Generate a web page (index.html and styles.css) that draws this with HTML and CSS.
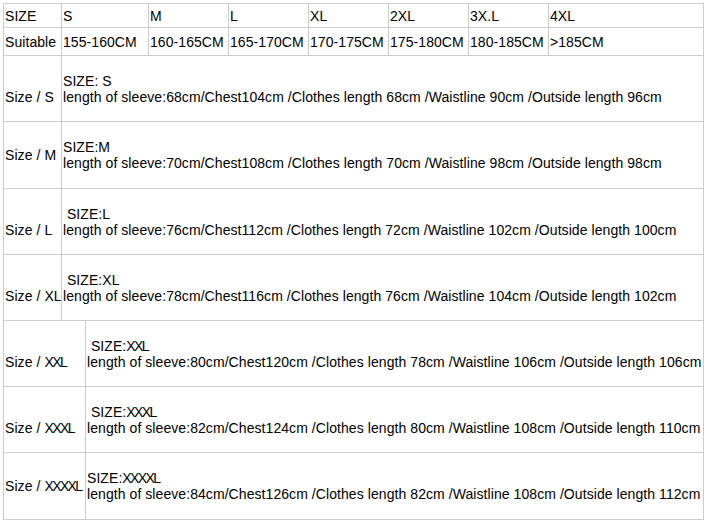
FILE: index.html
```html
<!DOCTYPE html>
<html lang="en">
<head>
<meta charset="utf-8">
<title>Size chart</title>
<link rel="stylesheet" href="styles.css">
</head>
<body>
<div class="chart">
  <div class="grid grid--head">
    <div class="cell row1">SIZE</div>
    <div class="cell row1">S</div>
    <div class="cell row1">M</div>
    <div class="cell row1">L</div>
    <div class="cell row1">XL</div>
    <div class="cell row1">2XL</div>
    <div class="cell row1">3X.L</div>
    <div class="cell row1">4XL</div>
    <div class="cell row2">Suitable</div>
    <div class="cell row2">155-160CM</div>
    <div class="cell row2">160-165CM</div>
    <div class="cell row2">165-170CM</div>
    <div class="cell row2">170-175CM</div>
    <div class="cell row2">175-180CM</div>
    <div class="cell row2">180-185CM</div>
    <div class="cell row2">&gt;185CM</div>
  </div>

  <div class="grid grid--a">
    <div class="cell tall"><span class="label low">Size / S</span></div>
    <div class="cell tall"><div class="detail">SIZE: S<br>length of sleeve:68cm/Chest104cm /Clothes length 68cm /Waistline 90cm /Outside length 96cm</div></div>

    <div class="cell tall tall--x"><span class="label">Size / M</span></div>
    <div class="cell tall tall--x"><div class="detail">SIZE:M<br>length of sleeve:70cm/Chest108cm /Clothes length 70cm /Waistline 98cm /Outside length 98cm</div></div>

    <div class="cell tall"><span class="label low">Size / L</span></div>
    <div class="cell tall"><div class="detail">&nbsp;SIZE:L<br>length of sleeve:76cm/Chest112cm /Clothes length 72cm /Waistline 102cm /Outside length 100cm</div></div>

    <div class="cell tall"><span class="label low">Size / XL</span></div>
    <div class="cell tall"><div class="detail">&nbsp;SIZE:XL<br>length of sleeve:78cm/Chest116cm /Clothes length 76cm /Waistline 104cm /Outside length 102cm</div></div>
  </div>

  <div class="grid grid--b">
    <div class="cell tall"><span class="label low">Size / <span class="xs">XX</span>L</span></div>
    <div class="cell tall"><div class="detail">&nbsp;SIZE:<span class="xs">XX</span>L<br>length of sleeve:80cm/Chest120cm /Clothes length 78cm /Waistline 106cm /Outside length 106cm</div></div>

    <div class="cell tall"><span class="label low">Size / <span class="xs">XXX</span>L</span></div>
    <div class="cell tall"><div class="detail">&nbsp;SIZE:<span class="xs">XXX</span>L<br>length of sleeve:82cm/Chest124cm /Clothes length 80cm /Waistline 108cm /Outside length 110cm</div></div>

    <div class="cell tall tall--x"><span class="label">Size / <span class="xs">XXXX</span>L</span></div>
    <div class="cell tall tall--x"><div class="detail">SIZE:<span class="xs">XXXX</span>L<br>length of sleeve:84cm/Chest126cm /Clothes length 82cm /Waistline 108cm /Outside length 112cm</div></div>
  </div>
</div>
</body>
</html>
```

FILE: styles.css
```css
html, body {
  margin: 0;
  padding: 0;
  background: #ffffff;
}

body {
  font-family: "Liberation Sans", Arial, sans-serif;
  font-size: 14px;
  line-height: 16px;
  color: #000000;
  letter-spacing: 0.07px;
}

.chart {
  margin: 3px 0 0 3px;
  width: 701px;
  box-sizing: border-box;
  border-left: 1px solid #cccccc;
  border-top: 1px solid #cccccc;
}

.grid {
  display: grid;
}

.grid--head {
  grid-template-columns: 58px 87px 80px 80px 80px 80px 80px 155px;
}

.grid--a {
  grid-template-columns: 58px 642px;
}

.grid--b {
  grid-template-columns: 82px 618px;
}

.cell {
  box-sizing: border-box;
  border-right: 1px solid #cccccc;
  border-bottom: 1px solid #cccccc;
  padding-left: 1px;
  display: flex;
  align-items: center;
  white-space: nowrap;
  overflow: hidden;
}

.row1 {
  height: 24px;
}

.row2 {
  height: 28px;
}

.tall {
  height: 66px;
}

.tall--x {
  height: 67px;
}

.label.low {
  padding-top: 16px;
}

.xs {
  letter-spacing: -1.6px;
}

.detail {
  white-space: nowrap;
}
```
